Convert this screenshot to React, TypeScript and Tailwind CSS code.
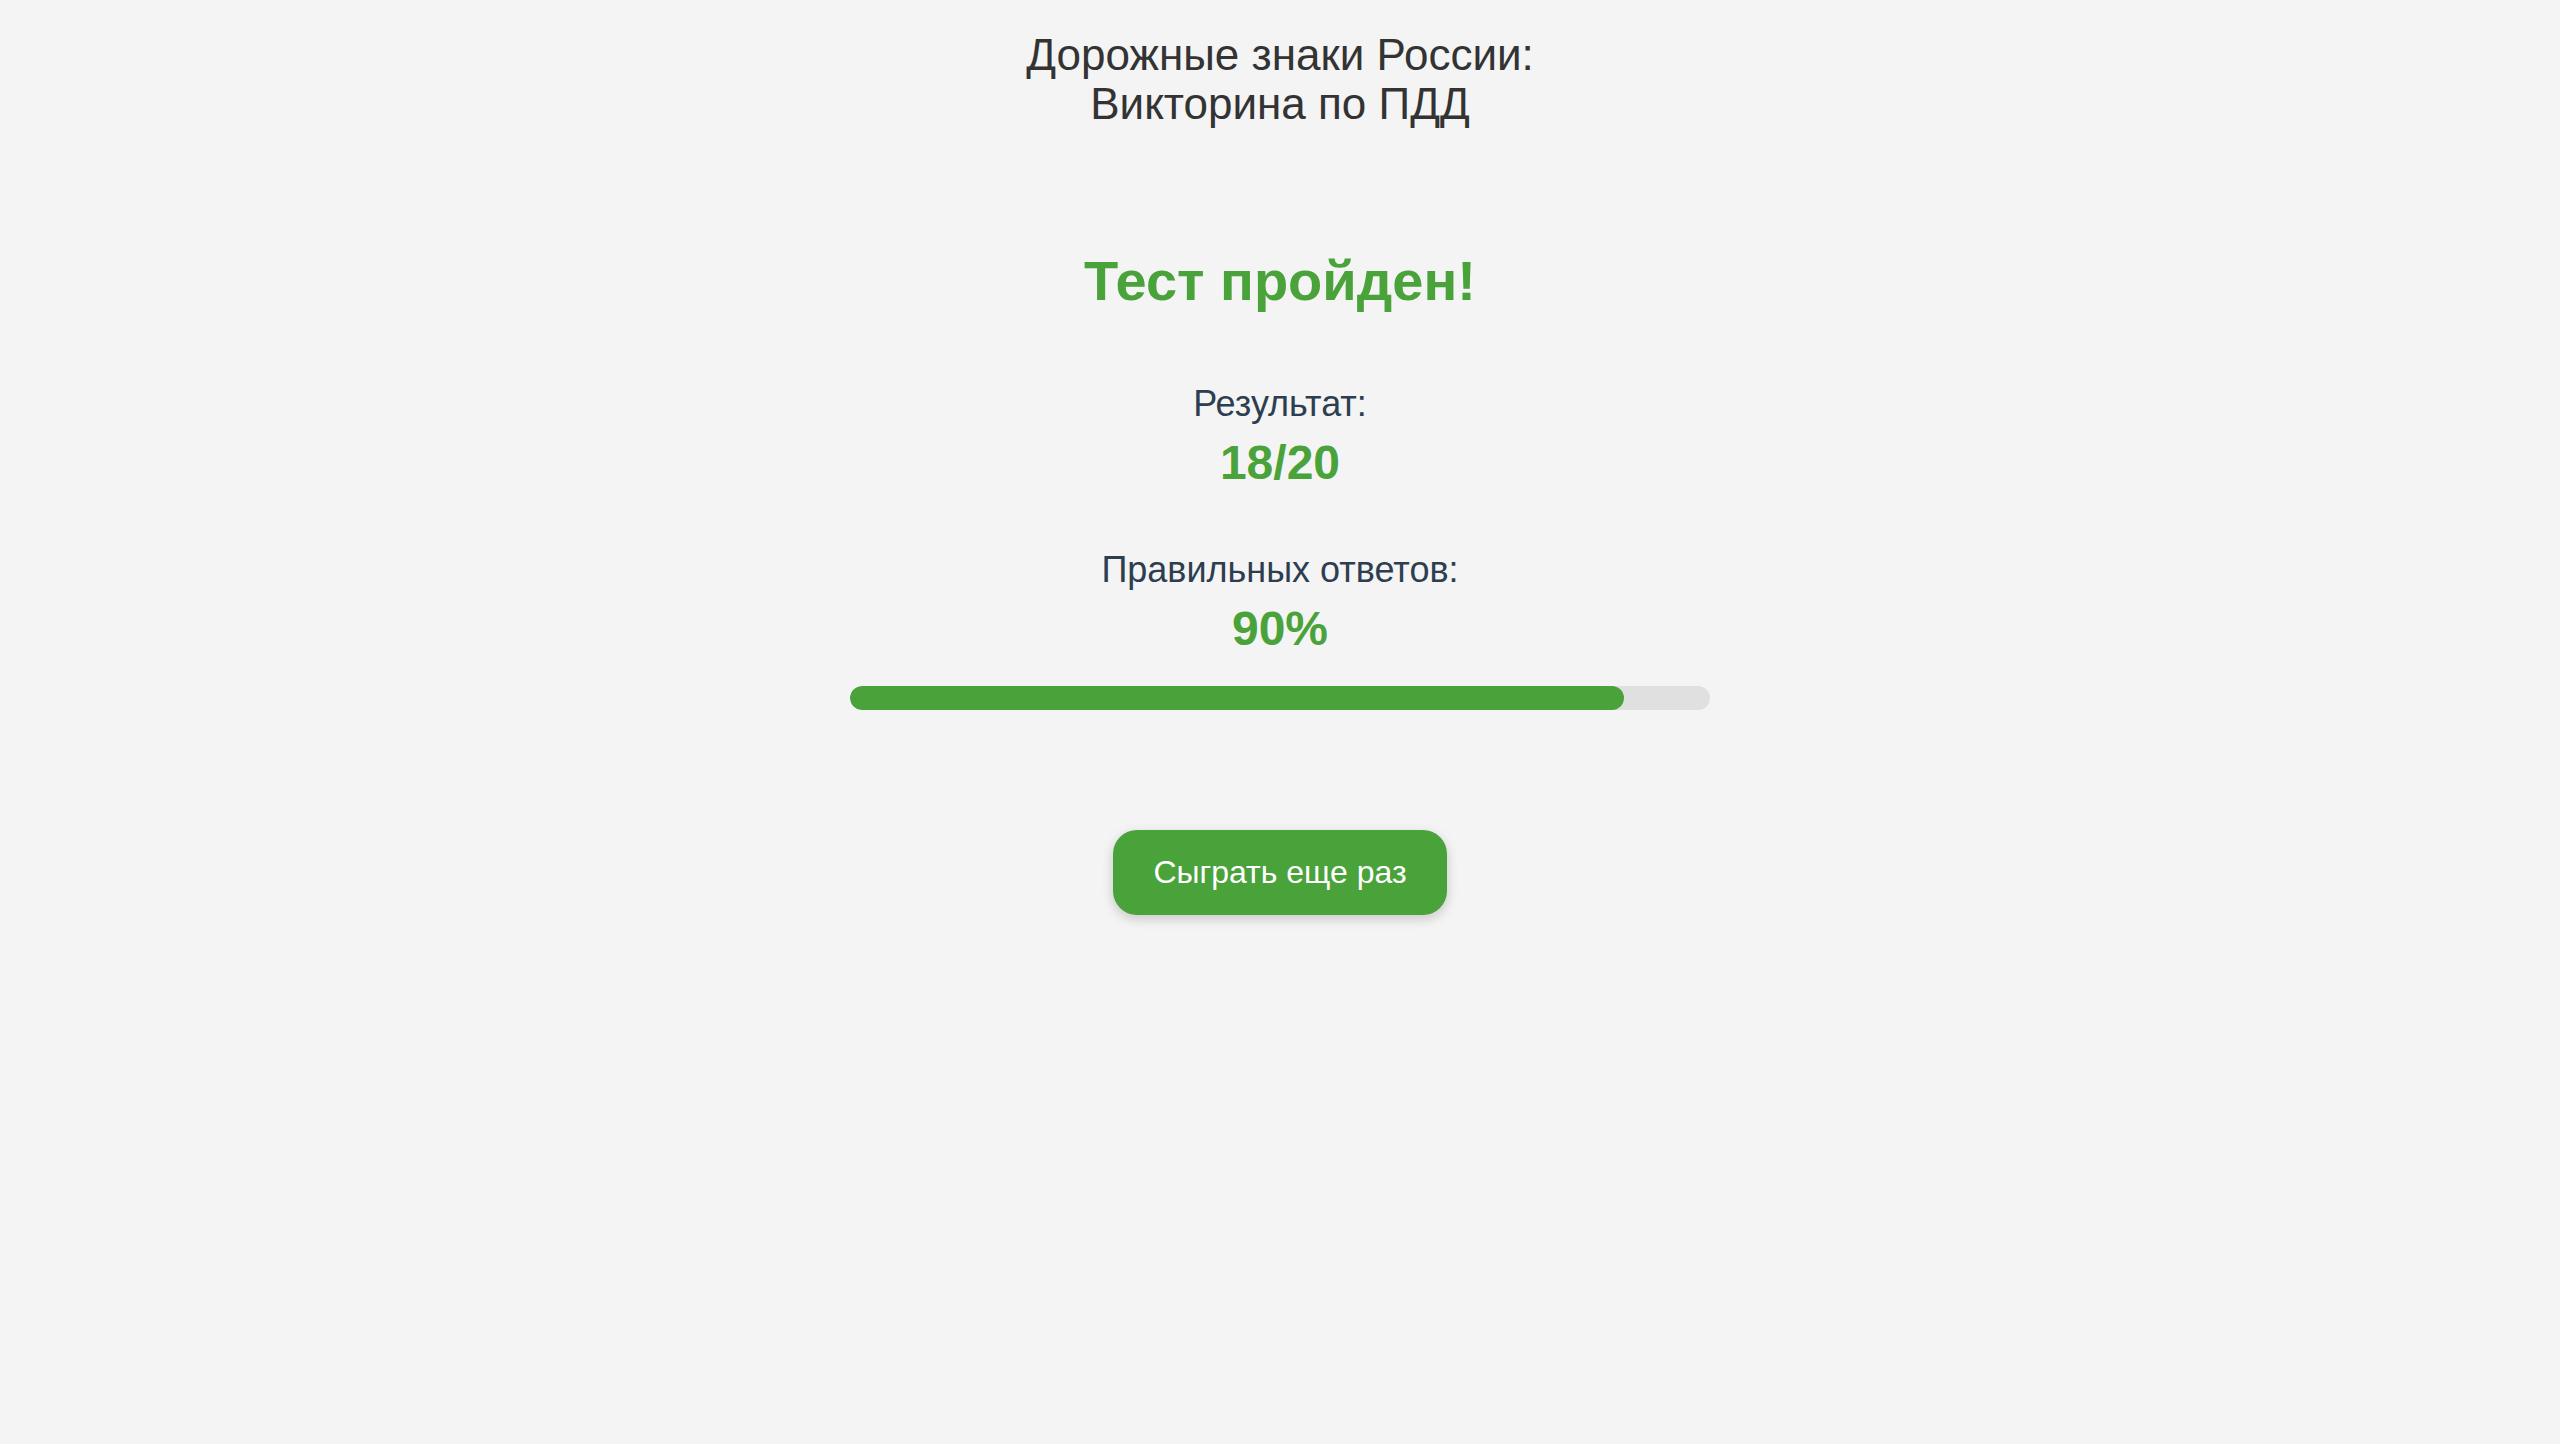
import React from 'react';

const GREEN = 'text-[#4aa23a]';

interface StatProps {
  label: string;
  value: string;
  className?: string;
}

const Stat: React.FC<StatProps> = ({ label, value, className }) => (
  <div className={`flex flex-col items-center ${className ?? ''}`}>
    <div className="text-[36px] leading-[40px] text-[#2c3e50]">{label}</div>
    <div className={`mt-[11px] text-[48px] leading-[56px] font-bold ${GREEN}`}>{value}</div>
  </div>
);

const App: React.FC = () => {
  const correct = 18;
  const total = 20;
  const percent = Math.round((correct / total) * 100);

  return (
    <div
      className="min-h-[1444px] w-full bg-[#f4f4f4] flex flex-col items-center pt-[30px]"
      style={{ fontFamily: '"Liberation Sans", Arial, sans-serif' }}
    >
      <h1 className="text-[44px] leading-[49px] text-[#333333] text-center font-normal">
        Дорожные знаки России:
        <br />
        Викторина по ПДД
      </h1>

      <h2 className={`mt-[121px] text-[56px] leading-[64px] font-bold ${GREEN}`}>Тест пройден!</h2>

      <Stat className="mt-[71px]" label="Результат:" value={`${correct}/${total}`} />
      <Stat className="mt-[59px]" label="Правильных ответов:" value={`${percent}%`} />

      <div className="mt-[29px] w-[860px] h-[24px] rounded-full bg-[#e0e0e0] overflow-hidden">
        <div className="h-full rounded-full bg-[#4aa23a]" style={{ width: `${percent}%` }} />
      </div>

      <button className="mt-[120px] h-[85px] px-[40px] rounded-[24px] bg-[#4aa23a] text-white text-[32px] leading-[37px] shadow-[0_4px_12px_rgba(0,0,0,0.18)]">
        Сыграть еще раз
      </button>
    </div>
  );
};

export default App;
